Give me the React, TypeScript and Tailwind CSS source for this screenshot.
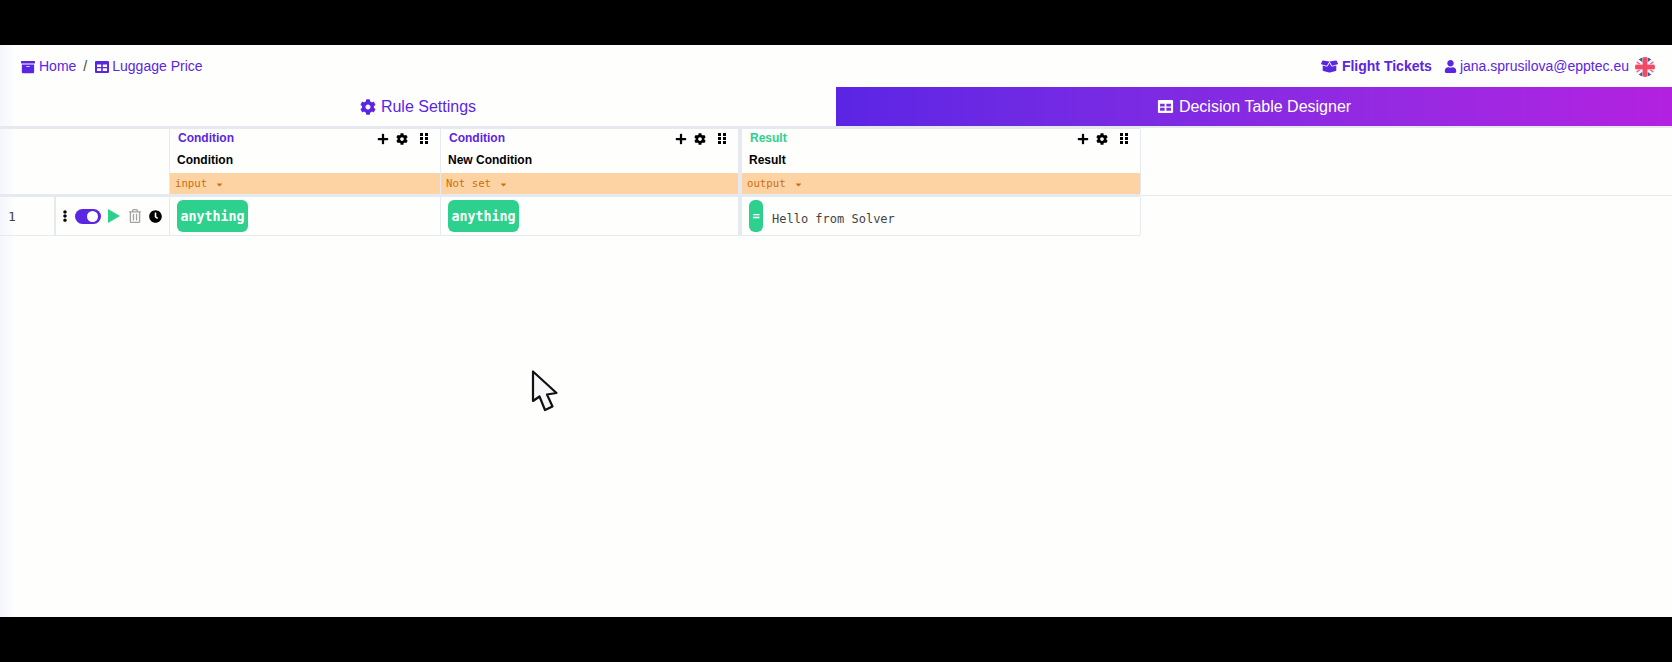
import { FaArchive, FaBoxOpen, FaClock, FaCog, FaEllipsisV, FaPlus, FaRegTrashAlt, FaUser, FaCaretDown } from 'react-icons/fa';

const SANS = "font-['Liberation_Sans',Arial,sans-serif]";
const MONO = "font-['DejaVu_Sans_Mono',monospace]";

const GripIcon = () => (
  <svg width="8" height="11" viewBox="0 0 8 11" fill="#000">
    <rect x="0" y="0" width="3" height="3" />
    <rect x="5" y="0" width="3" height="3" />
    <rect x="0" y="4" width="3" height="3" />
    <rect x="5" y="4" width="3" height="3" />
    <rect x="0" y="8" width="3" height="3" />
    <rect x="5" y="8" width="3" height="3" />
  </svg>
);

const TableIcon = ({ width, height }: { width: number; height: number }) => (
  <svg width={width} height={height} viewBox="0 0 14 12" fill="currentColor">
    <path
      fillRule="evenodd"
      d="M1 0 H13 A1 1 0 0 1 14 1 V11 A1 1 0 0 1 13 12 H1 A1 1 0 0 1 0 11 V1 A1 1 0 0 1 1 0 Z M2 3.5 V6 H6.2 V3.5 Z M7.8 3.5 V6 H12 V3.5 Z M2 7.2 V10 H6.2 V7.2 Z M7.8 7.2 V10 H12 V7.2 Z"
    />
  </svg>
);

const UkFlag = () => (
  <svg width="20" height="20" viewBox="0 0 38 38">
    <defs>
      <clipPath id="flagClip">
        <circle cx="19" cy="19" r="19" />
      </clipPath>
    </defs>
    <g clipPath="url(#flagClip)">
      <rect width="38" height="38" fill="#f6f6f9" />
      <path d="M6 4 L14 10 V1 Z M32 4 L24 10 V1 Z M6 34 L14 28 V37 Z M32 34 L24 28 V37 Z" fill="#4a5a9c" />
      <path d="M1 6 L11 14 H7 L1 9 Z M37 6 L27 14 H31 L37 9 Z M1 32 L11 24 H7 L1 29 Z M37 32 L27 24 H31 L37 29 Z" fill="#ef5a72" />
      <rect x="14.5" width="9" height="38" fill="#f04a66" />
      <rect y="14.5" width="38" height="9" fill="#f04a66" />
    </g>
  </svg>
);

const Cursor = () => (
  <svg width="30" height="44" viewBox="0 0 30 44" className="absolute left-[530px] top-[369px]">
    <path d="M3 2.5 L3 32 L9.5 27.5 L15 41 L22.5 37.5 L17 25.5 L26.5 24 Z" fill="#f7f7f9" stroke="#111" strokeWidth="2.2" strokeLinejoin="round" />
  </svg>
);

interface ColumnProps {
  kind: string;
  name: string;
  type: string;
  width: string;
  kindColor: string;
}

const ColumnHeader = ({ kind, name, type, width, kindColor }: ColumnProps) => (
  <div className={`${width} shrink-0 flex flex-col bg-[#fefefd]`}>
    <div className="flex h-[18px] items-center justify-between pl-2 pr-[12px]">
      <span className={`${kindColor} ${SANS} text-[12px] font-bold`}>{kind}</span>
      <div className="mt-px flex items-center">
        <FaPlus size={12} color="#000" />
        <FaCog size={12} color="#000" className="ml-[7px]" />
        <span className="ml-3 flex"><GripIcon /></span>
      </div>
    </div>
    <div className={`flex h-[26px] items-center pl-[7px] text-[12px] font-bold text-black ${SANS}`}>{name}</div>
    <div className={`flex h-[21px] items-center gap-[8px] bg-[#fed3a4] pl-[5px] pt-px text-[10.7px] text-[#c9700f] ${MONO}`}>
      <span>{type}</span>
      <FaCaretDown size={9} />
    </div>
  </div>
);

const Anything = () => (
  <span className={`flex h-8 w-[71px] items-center justify-center rounded-[6px] bg-[#2dd08c] pt-px text-[13.3px] font-bold text-white ${MONO}`}>
    anything
  </span>
);

export default function App() {
  return (
    <div className={`relative flex h-[662px] w-[1672px] flex-col overflow-hidden bg-black ${SANS}`}>
      <div className="h-[45px] shrink-0 bg-black" />
      <div className="flex flex-1 flex-col bg-[linear-gradient(to_right,#f5f6fb,#fefefd_16px)]">
        {/* top bar */}
        <div className="flex h-[42px] shrink-0 items-start justify-between pl-[21px] pr-[17px] pt-[11px] text-[14px] text-[#5b25e4]">
          <div className="flex items-center">
            <FaArchive size={14} />
            <span className="ml-1">Home</span>
            <span className="ml-[7px] mr-2 text-[#444]">/</span>
            <TableIcon width={14} height={12} />
            <span className="ml-[3px]">Luggage Price</span>
          </div>
          <div className="flex items-center">
            <FaBoxOpen size={17} />
            <span className="ml-[4px] font-bold">Flight Tickets</span>
            <FaUser size={13} className="ml-3" />
            <span className="ml-[3px]">jana.sprusilova@epptec.eu</span>
            <span className="ml-[6px] flex"><UkFlag /></span>
          </div>
        </div>
        {/* tabs */}
        <div className="flex h-[39px] shrink-0 text-[16px]">
          <div className="flex w-1/2 items-center justify-center gap-[5px] text-[#5b25e4]">
            <FaCog size={16} />
            <span>Rule Settings</span>
          </div>
          <div className="flex w-1/2 items-center justify-center gap-[5px] bg-gradient-to-r from-[#5b25e4] to-[#b321e0] text-white">
            <TableIcon width={17} height={13} />
            <span>Decision Table Designer</span>
          </div>
        </div>
        <div className="flex h-[3px] shrink-0">
          <div className="w-[1140px] bg-[#e5e9f0]" />
          <div className="h-[2px] flex-1 bg-[#e5e9f0]" />
        </div>
        {/* table header */}
        <div className="flex h-[65px] shrink-0">
          <div className="w-[169px] shrink-0" />
          <div className="w-px bg-[#e5e9f0]" />
          <ColumnHeader kind="Condition" name="Condition" type="input" width="w-[270px]" kindColor="text-[#5b25e4]" />
          <div className="w-px bg-[#e5e9f0]" />
          <ColumnHeader kind="Condition" name="New Condition" type="Not set" width="w-[297px]" kindColor="text-[#5b25e4]" />
          <div className="w-1 bg-[#e5e9f0]" />
          <ColumnHeader kind="Result" name="Result" type="output" width="w-[398px]" kindColor="text-[#2dd08c]" />
          <div className="w-px bg-[#e5e9f0]" />
        </div>
        <div className="flex h-[3px] shrink-0">
          <div className="w-[1140px] bg-[#e5e9f0]" />
          <div className="mt-px h-px flex-1 bg-[#e5e9f0]" />
        </div>
        {/* table row */}
        <div className="flex h-[38px] shrink-0">
          <div className={`flex w-[54px] shrink-0 items-center pl-2 pt-[2px] text-[13px] text-[#444] ${MONO}`}>1</div>
          <div className="w-[2px] bg-[#e5e9f0]" />
          <div className="flex w-[113px] shrink-0 items-center bg-[#fefefd] pl-[3px]">
            <FaEllipsisV size={12} color="#000" />
            <span className="ml-1 flex h-[15px] w-[26px] items-center justify-end rounded-full bg-[#5b25e4] pr-[3px]">
              <span className="h-[11px] w-[11px] rounded-full bg-white" />
            </span>
            <svg width="12" height="14" viewBox="0 0 12 14" className="ml-[7px]">
              <path d="M0 0 L12 7 L0 14 Z" fill="#2dd08c" />
            </svg>
            <FaRegTrashAlt size={14} color="#a3a3a3" className="ml-2" />
            <FaClock size={13} color="#000" className="ml-[7px]" />
          </div>
          <div className="w-px bg-[#e5e9f0]" />
          <div className="flex w-[270px] shrink-0 items-center bg-[#fefefd] pl-[7px]">
            <Anything />
          </div>
          <div className="w-px bg-[#e5e9f0]" />
          <div className="flex w-[297px] shrink-0 items-center bg-[#fefefd] pl-[7px]">
            <Anything />
          </div>
          <div className="w-1 bg-[#e5e9f0]" />
          <div className="flex w-[398px] shrink-0 items-center bg-[#fefefd] pl-[7px]">
            <span className={`flex h-8 w-[14px] items-center justify-center rounded-[6px] bg-[#2dd08c] text-[12px] font-bold text-white ${MONO}`}>=</span>
            <span className={`ml-[9px] mt-[5px] text-[12px] text-[#444] ${MONO}`}>Hello from Solver</span>
          </div>
          <div className="w-px bg-[#e5e9f0]" />
        </div>
        <div className="flex h-px shrink-0">
          <div className="w-[1140px] bg-[#e5e9f0]" />
        </div>
      </div>
      <div className="h-[45px] shrink-0 bg-black" />
      <Cursor />
    </div>
  );
}
